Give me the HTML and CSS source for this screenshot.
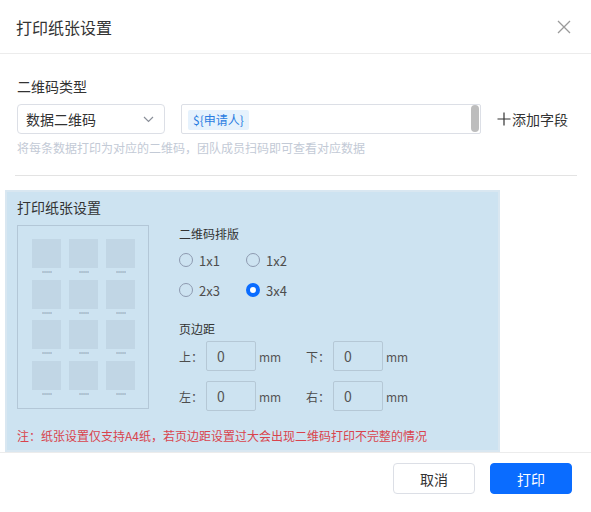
FILE: index.html
```html
<!DOCTYPE html>
<html lang="zh-CN">
<head>
<meta charset="utf-8">
<title>打印纸张设置</title>
<link rel="stylesheet" href="styles.css">
</head>
<body>
<div class="dialog">
  <header class="dialog-header">
    <span class="dialog-title">打印纸张设置</span>
    <button class="close-btn" type="button" aria-label="关闭">
      <svg width="14" height="14" viewBox="0 0 14 14"><path d="M1 1L13 13M13 1L1 13" stroke="#9a9a9a" stroke-width="1.3" fill="none"/></svg>
    </button>
  </header>

  <main class="dialog-body">
    <div class="field-label">二维码类型</div>
    <div class="code-row">
      <div class="select">
        <span>数据二维码</span>
        <svg class="chevron" width="11" height="7" viewBox="0 0 11 7"><path d="M1 1L5.5 5.5L10 1" stroke="#8a8f99" stroke-width="1.2" fill="none"/></svg>
      </div>
      <div class="field-box">
        <span class="tag">${申请人}</span>
        <span class="scroll-thumb"></span>
      </div>
      <button class="add-field" type="button">
        <svg width="14" height="14" viewBox="0 0 14 14"><path d="M7 0.5V13.5M0.5 7H13.5" stroke="#333" stroke-width="1.2" fill="none"/></svg>
        <span>添加字段</span>
      </button>
    </div>
    <div class="hint">将每条数据打印为对应的二维码，团队成员扫码即可查看对应数据</div>
    <hr class="divider">

    <section class="paper-panel">
      <div class="panel-title">打印纸张设置</div>
      <div class="panel-main">
        <div class="paper-preview">
          <div class="cell"><i></i><span>xxxxx</span></div>
          <div class="cell"><i></i><span>xxxxx</span></div>
          <div class="cell"><i></i><span>xxxxx</span></div>
          <div class="cell"><i></i><span>xxxxx</span></div>
          <div class="cell"><i></i><span>xxxxx</span></div>
          <div class="cell"><i></i><span>xxxxx</span></div>
          <div class="cell"><i></i><span>xxxxx</span></div>
          <div class="cell"><i></i><span>xxxxx</span></div>
          <div class="cell"><i></i><span>xxxxx</span></div>
          <div class="cell"><i></i><span>xxxxx</span></div>
          <div class="cell"><i></i><span>xxxxx</span></div>
          <div class="cell"><i></i><span>xxxxx</span></div>
        </div>

        <div class="settings">
          <div class="set-label">二维码排版</div>
          <div class="radio-grid">
            <label class="radio"><span class="dot"></span>1x1</label>
            <label class="radio"><span class="dot"></span>1x2</label>
            <label class="radio"><span class="dot"></span>2x3</label>
            <label class="radio checked"><span class="dot"></span>3x4</label>
          </div>
          <div class="set-label margin-label">页边距</div>
          <div class="margin-grid">
            <div class="margin-item"><span class="m-name">上：</span><span class="m-input">0</span><span class="m-unit">mm</span></div>
            <div class="margin-item"><span class="m-name">下：</span><span class="m-input">0</span><span class="m-unit">mm</span></div>
            <div class="margin-item"><span class="m-name">左：</span><span class="m-input">0</span><span class="m-unit">mm</span></div>
            <div class="margin-item"><span class="m-name">右：</span><span class="m-input">0</span><span class="m-unit">mm</span></div>
          </div>
        </div>
      </div>
      <p class="note">注：纸张设置仅支持A4纸，若页边距设置过大会出现二维码打印不完整的情况</p>
    </section>
  </main>

  <footer class="dialog-footer">
    <button class="btn btn-cancel" type="button">取消</button>
    <button class="btn btn-primary" type="button">打印</button>
  </footer>
</div>
</body>
</html>
```

FILE: styles.css
```css
* {
  box-sizing: border-box;
}

html, body {
  margin: 0;
  padding: 0;
  background: #fff;
}

body {
  font-family: "Noto Sans CJK SC", "Noto Sans", sans-serif;
  color: #333;
}

.dialog {
  width: 591px;
  height: 512px;
  display: flex;
  flex-direction: column;
  background: #fff;
}

/* header */
.dialog-header {
  height: 54px;
  flex: none;
  display: flex;
  align-items: center;
  justify-content: space-between;
  padding: 0 20px 0 16px;
  border-bottom: 1px solid #ececec;
}

.dialog-title {
  font-size: 16px;
  line-height: 22px;
  color: #333;
}

.close-btn {
  border: 0;
  background: none;
  padding: 0;
  width: 14px;
  height: 14px;
  display: flex;
}

/* body */
.dialog-body {
  flex: 1;
  overflow: hidden;
  padding: 22px 14px 0 15px;
  display: flex;
  flex-direction: column;
}

.field-label {
  font-size: 14px;
  line-height: 20px;
  padding-left: 2px;
  color: #333;
}

.code-row {
  margin-top: 8px;
  padding-left: 2px;
  display: flex;
  align-items: center;
  gap: 16px;
}

.select {
  width: 148px;
  height: 30px;
  border: 1px solid #dcdfe6;
  border-radius: 4px;
  display: flex;
  align-items: center;
  justify-content: space-between;
  padding: 0 10px 0 8px;
  font-size: 14px;
  color: #333;
}

.field-box {
  position: relative;
  width: 300px;
  height: 30px;
  border: 1px solid #dcdfe6;
  border-radius: 2px;
  padding: 5px 6px;
  display: flex;
  align-items: flex-start;
}

.tag {
  height: 20px;
  line-height: 20px;
  padding: 0 5px;
  font-size: 12px;
  color: #2a7de1;
  background: #e6f2fd;
  border-radius: 2px;
}

/* scrollbar thumb of the field box */
.scroll-thumb {
  position: absolute;
  right: 1px;
  top: 0;
  width: 8px;
  height: 27px;
  border-radius: 4px;
  background: #bdbdbd;
}

.add-field {
  border: 0;
  background: none;
  padding: 0;
  font-family: inherit;
  font-size: 14px;
  color: #333;
  display: flex;
  align-items: center;
  gap: 1px;
}

.hint {
  margin-top: 5px;
  padding-left: 2px;
  font-size: 12px;
  line-height: 17px;
  color: #c3cad6;
}

.divider {
  margin: 19px 0 0;
  border: 0;
  border-top: 1px solid #e3e3e3;
  height: 0;
}

/* paper settings panel */
.paper-panel {
  margin: 14px 0 0 -10px;
  width: 495px;
  flex: none;
  background: #cde3f1;
  border: 2px solid #d9e7f1;
  padding: 5px 10px 6px 10px;
}

.panel-title {
  font-size: 14px;
  line-height: 20px;
  color: #333;
}

.panel-main {
  margin-top: 8px;
  display: flex;
  gap: 30px;
}

.paper-preview {
  width: 132px;
  height: 184px;
  border: 1px solid #b3c7d7;
  padding: 13px 0 0 14px;
  display: grid;
  grid-template-columns: repeat(3, 29px);
  grid-auto-rows: 40.5px;
  column-gap: 8px;
  align-content: start;
}

.cell {
  display: flex;
  flex-direction: column;
  align-items: center;
}

.cell i {
  display: block;
  width: 29px;
  height: 29px;
  background: #c1d6e5;
}

/* tiny caption under each code, drawn at half size */
.cell span {
  display: block;
  margin-top: -1px;
  font-family: "Liberation Sans", sans-serif;
  font-size: 8px;
  line-height: 10px;
  color: #8093a8;
  transform: scale(0.5);
  transform-origin: center;
}

.settings {
  display: flex;
  flex-direction: column;
}

.set-label {
  font-size: 12px;
  line-height: 18px;
  color: #333;
}

.radio-grid {
  margin-top: 7px;
  display: grid;
  grid-template-columns: 67px 67px;
  row-gap: 10px;
}

.radio {
  display: flex;
  align-items: center;
  height: 20px;
  font-size: 13px;
  color: #4d4d4d;
  gap: 6px;
}

.dot {
  width: 14px;
  height: 14px;
  border-radius: 50%;
  border: 1px solid #8d9ab0;
  background: transparent;
}

.radio.checked .dot {
  border: 4px solid #0a6cff;
  background: #fff;
}

.margin-label {
  margin-top: 20px;
}

.margin-grid {
  margin-top: 3px;
  display: grid;
  grid-template-columns: 127px 127px;
  row-gap: 10px;
}

.margin-item {
  display: flex;
  align-items: center;
}

.m-name {
  width: 27px;
  font-size: 12px;
  color: #4d4d4d;
}

.m-input {
  width: 50px;
  height: 30px;
  border: 1px solid #b5c8d6;
  border-radius: 2px;
  padding-left: 10px;
  font-size: 14px;
  line-height: 28px;
  color: #555;
}

.m-unit {
  margin-left: 3px;
  font-size: 12px;
  color: #555;
}

.note {
  margin: 16px 0 0;
  font-size: 12px;
  line-height: 17px;
  color: #d9434d;
}

/* footer */
.dialog-footer {
  height: 60px;
  flex: none;
  border-top: 1px solid #ececec;
  display: flex;
  justify-content: flex-end;
  align-items: flex-start;
  gap: 15px;
  padding: 10px 19px 0 0;
}

.btn {
  width: 82px;
  height: 31px;
  border-radius: 4px;
  font-family: inherit;
  font-size: 14px;
  padding: 0;
}

.btn-cancel {
  background: #fff;
  border: 1px solid #dcdfe6;
  color: #333;
}

.btn-primary {
  background: #0a6cff;
  border: 1px solid #0a6cff;
  color: #fff;
}
```
